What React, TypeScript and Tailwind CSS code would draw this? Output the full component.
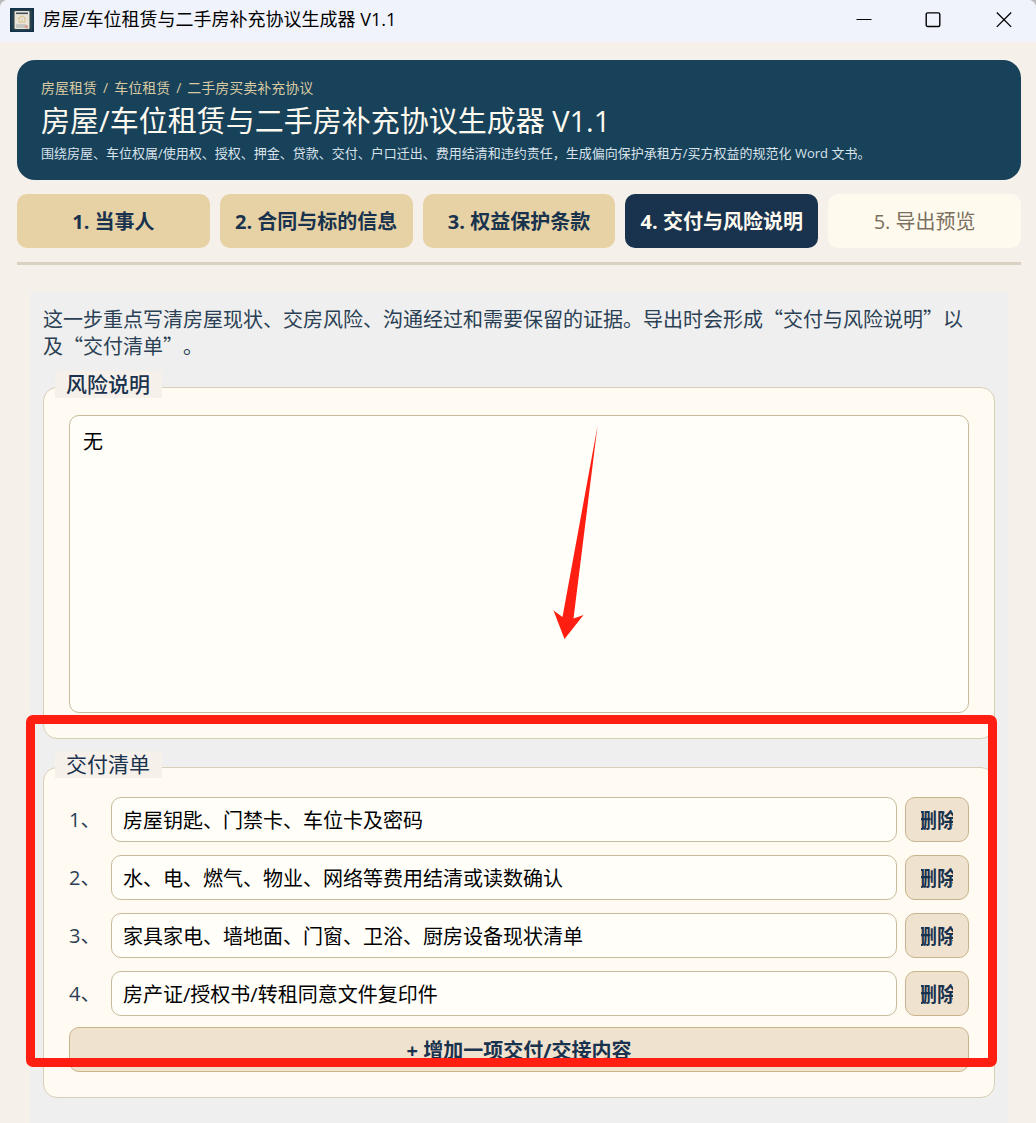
import { Fragment, useState } from "react";

const categories = ["房屋租赁", "车位租赁", "二手房买卖补充协议"];
const steps = ["1. 当事人", "2. 合同与标的信息", "3. 权益保护条款", "4. 交付与风险说明", "5. 导出预览"];
const activeStep = 3;

const initialItems = [
  "房屋钥匙、门禁卡、车位卡及密码",
  "水、电、燃气、物业、网络等费用结清或读数确认",
  "家具家电、墙地面、门窗、卫浴、厨房设备现状清单",
  "房产证/授权书/转租同意文件复印件",
];

function AppIcon() {
  return (
    <svg width="24" height="24" viewBox="0 0 24 24" aria-hidden="true">
      <rect width="24" height="24" fill="#14334a" />
      <rect x="1.5" y="1.5" width="21" height="21" rx="3" fill="#27404c" />
      <rect x="4.5" y="3" width="15" height="18" rx="1" fill="#e9e4d8" />
      <rect x="6" y="4.5" width="12" height="1.6" fill="#43535c" />
      <path d="M8 10.8 12 8l4 2.8M9.2 10.5v3.7h5.6v-3.7M12 11.2v2.6" fill="none" stroke="#dcc596" strokeWidth="1.1" />
      <rect x="6" y="16.2" width="10" height="3.6" fill="#c3c4bf" />
      <circle cx="16.4" cy="18.8" r="1.8" fill="#d9a091" />
    </svg>
  );
}

function TitleBar() {
  return (
    <header className="flex h-[42px] items-start justify-between bg-[#f0f3fb]">
      <div className="flex h-[39px] items-center gap-[9px] pl-[10px] text-[18px] text-black">
        <AppIcon />
        <span>房屋/车位租赁与二手房补充协议生成器 V1.1</span>
      </div>
      <div className="flex h-[39px] text-black">
        <button aria-label="最小化" className="flex w-[68px] items-center justify-center">
          <svg width="16" height="16" viewBox="0 0 16 16" stroke="currentColor" fill="none">
            <path d="M0.5 7.5h15" />
          </svg>
        </button>
        <button aria-label="最大化" className="flex w-[70px] items-center justify-center">
          <svg width="16" height="16" viewBox="0 0 16 16" stroke="currentColor" fill="none" strokeWidth="1.4">
            <rect x="1.2" y="0.9" width="13.6" height="13.6" rx="1.5" />
          </svg>
        </button>
        <button aria-label="关闭" className="flex w-[68px] items-center justify-center pl-[4px]">
          <svg width="16" height="16" viewBox="0 0 16 16" stroke="currentColor" fill="none" strokeWidth="1.3">
            <path d="M0.8 0.5l14.4 14.4M15.2 0.5L0.8 14.9" />
          </svg>
        </button>
      </div>
    </header>
  );
}

function stepClass(index: number) {
  if (index === activeStep) return "bg-[#19324d] font-bold text-[#fffaf0]";
  if (index < activeStep) return "bg-[#e6d2a5] font-bold text-[#19324d]";
  return "bg-[#fffaee] text-[#7b705f]";
}

export default function App() {
  const [items, setItems] = useState(initialItems);
  const [risk, setRisk] = useState("无");

  return (
    <div className="bg-[#b9b9bb] font-['Open_Sans','Noto_Sans_CJK_SC',sans-serif]">
      <div className="flex min-h-screen flex-col overflow-hidden rounded-t-lg bg-[#f5f0ea]">
        <TitleBar />
        <main className="flex flex-1 flex-col pt-[18px] pr-[15px] pl-[17px]">
          <div className="min-h-[120px] rounded-[18px] bg-[#18415a] px-6 pt-[18px]">
            <p className="flex gap-1.5 text-[14px] leading-5 text-[#d8caa2]">
              {categories.map((name, i) => (
                <Fragment key={name}>
                  {i > 0 && <span>/</span>}
                  <span>{name}</span>
                </Fragment>
              ))}
            </p>
            <h1 className="text-[29px] leading-[45px] text-[#fffaf0]">
              房屋/车位租赁与二手房补充协议生成器 V1.1
            </h1>
            <p className="text-[13px] leading-5 text-[#d9e3ea]">
              围绕房屋、车位权属/使用权、授权、押金、贷款、交付、户口迁出、费用结清和违约责任，生成偏向保护承租方/买方权益的规范化
              Word 文书。
            </p>
          </div>

          <nav className="mt-[14px] grid grid-cols-5 gap-[10px]">
            {steps.map((step, i) => (
              <button
                key={step}
                aria-current={i === activeStep ? "step" : undefined}
                className={`h-[54px] rounded-[10px] pt-0.5 text-[20px] whitespace-nowrap ${stepClass(i)}`}
              >
                {step}
              </button>
            ))}
          </nav>
          <hr className="mt-[14px] border-t-[3px] border-[#dad1c3]" />

          <div className="mx-[13px] mt-[27px] flex-1 bg-[#efefef] px-[13px] pt-[13px] pb-[25px]">
            <p className="font-['Noto_Sans_CJK_SC',sans-serif] text-[20px] leading-[27px] text-[#2b3f55] [text-spacing-trim:space-all]">
              这一步重点写清房屋现状、交房风险、沟通经过和需要保留的证据。导出时会形成“交付与风险说明”以及“交付清单”。
            </p>

            <section className="mt-7 rounded-[14px] border border-[#d8cfb8] bg-[#fffaf2] px-[25px] pb-[25px]">
              <h2
                id="risk-title"
                className="-mt-[17px] -ml-[14px] h-[27px] w-[107px] bg-[#f5f0ea] pl-[11px] text-[21px] leading-[27px] font-medium text-[#19324d]"
              >
                风险说明
              </h2>
              <textarea
                aria-labelledby="risk-title"
                value={risk}
                onChange={(e) => setRisk(e.target.value)}
                className="mt-[17px] block h-[298px] w-full resize-none rounded-[10px] border border-[#c8bb9c] bg-[#fffef9] px-[13px] py-3 text-[20px] leading-[27px] text-black outline-none"
              />
            </section>

            <section className="relative mt-7 rounded-[14px] border border-[#d8cfb8] bg-[#fffaf2] px-[25px] pb-[25px]">
              <h2 className="-mt-[17px] -ml-[14px] h-[27px] w-[107px] bg-[#f5f0ea] pl-[11px] text-[21px] leading-[27px] text-[#19324d]">
                交付清单
              </h2>
              <ol className="mt-[19px] flex flex-col gap-[13px]">
                {items.map((item, i) => (
                  <li key={i} className="flex h-[45px] items-center">
                    <label htmlFor={`item-${i}`} className="w-[42px] text-[20px] text-[#2b3f55]">
                      {i + 1}、
                    </label>
                    <input
                      id={`item-${i}`}
                      value={item}
                      onChange={(e) => setItems(items.map((v, j) => (j === i ? e.target.value : v)))}
                      className="h-full min-w-0 flex-1 rounded-[10px] border border-[#c8bb9c] bg-[#fffef9] px-[11px] text-[20px] text-black outline-none"
                    />
                    <button
                      onClick={() => setItems(items.filter((_, j) => j !== i))}
                      className="ml-2 flex h-full w-16 items-center rounded-[10px] border border-[#c8b48c] bg-[#efe2cf] px-[15px] pt-0.5 text-[20px] font-bold text-[#19324d]"
                    >
                      <span className="flex w-full justify-center overflow-hidden whitespace-nowrap">删除</span>
                    </button>
                  </li>
                ))}
              </ol>
              <button
                onClick={() => setItems([...items, ""])}
                className="mt-[11px] block h-[45px] w-full rounded-[10px] border border-[#c8b48c] bg-[#efe2cf] pt-0.5 text-[20px] font-bold text-[#19324d]"
              >
                + 增加一项交付/交接内容
              </button>

              {/* Annotation: highlighted area and pointer */}
              <div className="pointer-events-none absolute -top-[53px] -right-[3px] bottom-[30px] -left-[18px] rounded-[7px] border-[9px] border-[#ff1f12]" />
              <svg
                className="pointer-events-none absolute -top-[342px] left-[509px]"
                width="46"
                height="214"
                viewBox="0 0 46 214"
                aria-hidden="true"
              >
                <path d="M44.5 0 20.5 192.5 30.5 189 11.5 213 0.5 184.5 9.5 191Z" fill="#ff1f12" />
              </svg>
            </section>
          </div>
        </main>
      </div>
    </div>
  );
}
